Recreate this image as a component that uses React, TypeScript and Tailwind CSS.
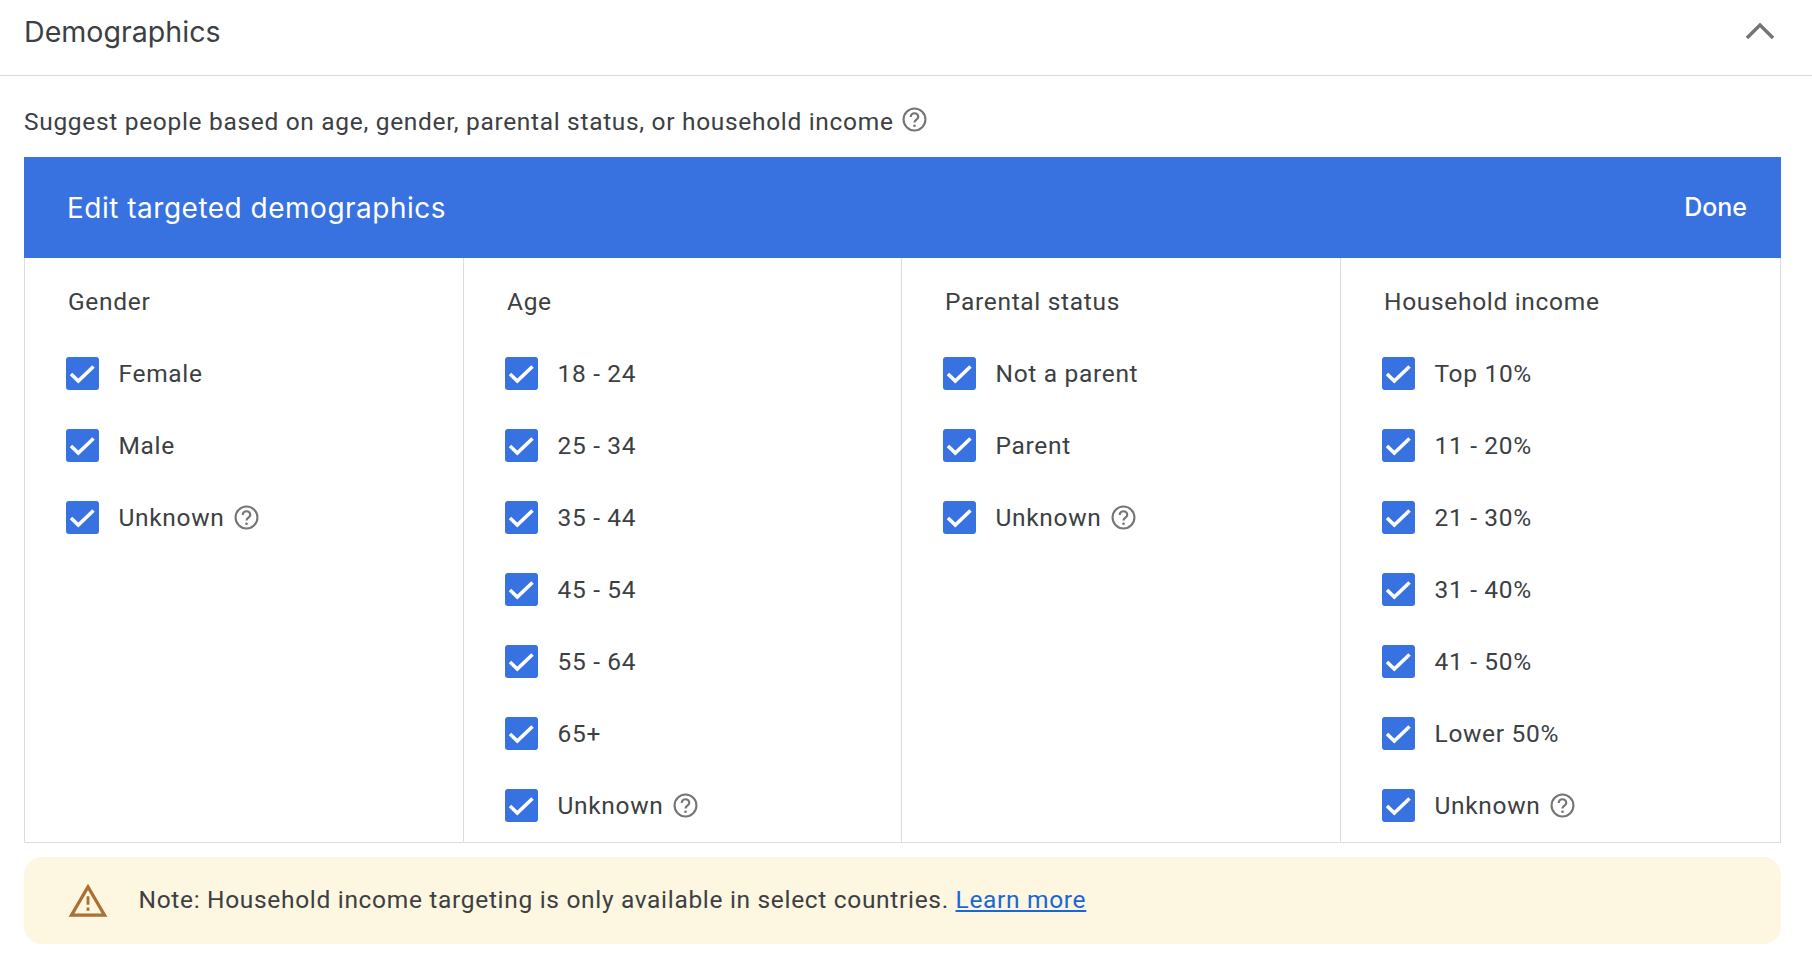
const cols = [
  { title: "Gender", items: ["Female", "Male", "Unknown?"] },
  { title: "Age", items: ["18 - 24", "25 - 34", "35 - 44", "45 - 54", "55 - 64", "65+", "Unknown?"] },
  { title: "Parental status", items: ["Not a parent", "Parent", "Unknown?"] },
  { title: "Household income", items: ["Top 10%", "11 - 20%", "21 - 30%", "31 - 40%", "41 - 50%", "Lower 50%", "Unknown?"] },
];

function Help({ className }: { className?: string }) {
  return (
    <svg viewBox="0 0 24 24" className={className} fill="none" stroke="#757575" strokeWidth="2">
      <circle cx="12" cy="12" r="10.5" />
      <path d="M8.4 9.6a3.6 3.6 0 0 1 7.2 0c0 2.4-3.6 2.6-3.6 5.2" strokeWidth="2.1" />
      <circle cx="12" cy="18" r="1.3" fill="#757575" stroke="none" />
    </svg>
  );
}

function Check() {
  return (
    <span className="mt-[1px] flex h-[33px] w-[33px] shrink-0 items-center justify-center rounded-[3px] bg-[#3871e0]">
      <svg viewBox="0 0 33 33" className="h-[33px] w-[33px]" fill="none" stroke="#fff" strokeWidth="3.6">
        <path d="M5 17l7.3 7L27.5 9.5" />
      </svg>
    </span>
  );
}

export default function App() {
  return (
    <div className="h-[962px] w-[1812px] overflow-hidden bg-white font-['Roboto',sans-serif] text-[#3c4043]">
      <div className="flex h-[76px] items-center justify-between border-b border-[#dadce0] pl-6 pr-[38px]">
        <span className="pb-[12px] text-[28.6px] leading-[62px] font-['Inter',sans-serif]">Demographics</span>
        <svg viewBox="0 0 28 16" className="mb-[14px] h-[16px] w-[28px]" fill="none" stroke="#757575" strokeWidth="3.4">
          <path d="M1 15L14 2l13 13" />
        </svg>
      </div>
      <div className="flex h-[81px] items-center pl-6 pt-[12px] text-[24.5px] tracking-[0.68px]">
        <span>Suggest people based on age, gender, parental status, or household income</span>
        <Help className="mb-[6px] ml-[8px] h-[25px] w-[25px]" />
      </div>
      <div className="mx-6 w-[1757px]">
        <div className="flex h-[101px] items-center justify-between bg-[#3871e0] pl-[43px] pr-[34px] text-white">
          <span className="text-[28px] tracking-[0.5px] font-['Inter',sans-serif]">Edit targeted demographics</span>
          <span className="text-[25px] font-['Inter',sans-serif] font-medium">Done</span>
        </div>
        <div className="grid h-[585px] grid-cols-[438px_438px_439px_1fr] border-x border-b border-[#dadce0]">
          {cols.map((c, i) => (
            <div key={c.title} className={i ? "border-l border-[#dadce0] pl-[41px]" : "pl-[41px]"}>
              <div className="ml-[2px] h-[79px] pt-[27px] text-[24.5px] leading-[34px] tracking-[0.68px]">{c.title}</div>
              <div className="flex flex-col">
                {c.items.map((t) => {
                  const help = t.endsWith("?");
                  return (
                    <div key={t} className="flex h-[72px] items-center">
                      <Check />
                      <span className="ml-[19.5px] pt-[2px] text-[24.5px] tracking-[0.68px]">{help ? t.slice(0, -1) : t}</span>
                      {help && <Help className="ml-[9px] h-[25px] w-[25px]" />}
                    </div>
                  );
                })}
              </div>
            </div>
          ))}
        </div>
        <div className="mt-[14px] flex h-[87px] items-center rounded-[18px] bg-[#fdf6e0] pl-[44px] text-[24.5px] tracking-[0.68px]">
          <svg viewBox="0 0 40 36" className="h-[34px] w-[40px] shrink-0" fill="none">
            <path d="M20 3L2.5 33h35z" stroke="#a96f33" strokeWidth="3.4" />
            <path d="M18.5 13h3v9h-3zM18.5 25h3v3.4h-3z" fill="#a96f33" />
          </svg>
          <span className="ml-[30.5px]">
            Note: Household income targeting is only available in select countries.{" "}
            <span className="text-[#1a66d6] underline">Learn more</span>
          </span>
        </div>
      </div>
    </div>
  );
}
